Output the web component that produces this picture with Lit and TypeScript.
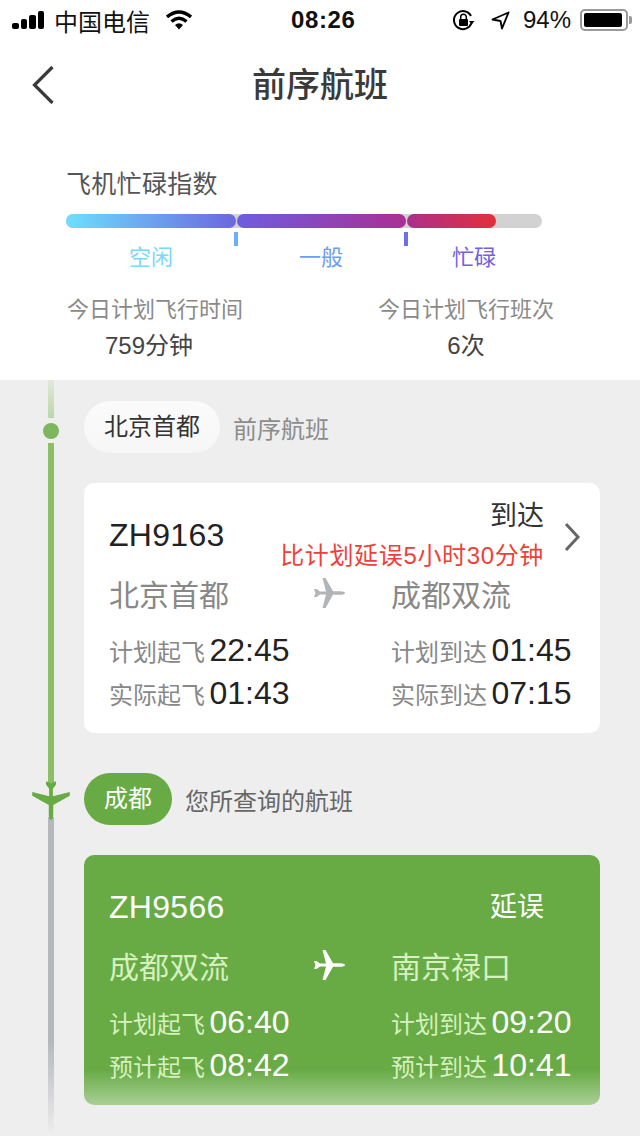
import { LitElement, html, css, svg } from "lit";
import { customElement } from "lit/decorators.js";

const planePath = "M1 12 L3.5 12 L7 14.5 L13 14.5 L9.5 1 L12.5 1 L20 14.2 L27 14.2 C30 14.2 32 15 32 16 C32 17 30 17.8 27 17.8 L20 17.8 L12.5 31 L9.5 31 L13 17.5 L7 17.5 L3.5 20 L1 20 L2.5 16 Z";

const plane = (cls: string) => html`<svg class=${cls} viewBox="0 0 32 32"><path d=${planePath} fill="currentColor"></path></svg>`;

interface Flight {
  no: string; status: string; delay?: string; from: string; to: string;
  times: [string, string, string, string][];
  kind: string;
}

@customElement("app-root")
export class AppRoot extends LitElement {
  static styles = css`
    :host { display: block; width: 640px; height: 1136px; overflow: hidden; background: #fff;
      font-family: "Liberation Sans", "Noto Sans CJK SC", sans-serif; color: #333; }
    .status { height: 40px; display: flex; align-items: center; padding-left: 12px; font-size: 24px; color: #111; }
    .signal { display: flex; align-items: flex-end; gap: 2px; height: 18px; width: 34px; margin-right: 8px; }
    .signal i { display: block; width: 6.5px; background: #000; border-radius: 2px; }
    .carrier { width: 95px; white-space: nowrap; }
    .wifi { width: 26px; height: 20px; margin-left: 17px; }
    .clock { margin-left: 99px; width: 70px; font-size: 24px; font-weight: 700; letter-spacing: 0.6px; white-space: nowrap; }
    .lock { width: 23px; height: 23px; margin-left: 91px; }
    .loc { width: 19px; height: 19px; margin-left: 16px; }
    .pct { margin-left: 13px; width: 52px; white-space: nowrap; }
    .batt { margin-left: 5px; width: 48px; height: 22px; box-sizing: border-box; border: 2px solid #999; border-radius: 5px; padding: 2px; position: relative; }
    .batt b { display: block; height: 100%; width: 94%; background: #000; border-radius: 2px; }
    .batt::after { content: ""; position: absolute; right: -6px; top: 5px; width: 3px; height: 8px; background: #999; border-radius: 0 2px 2px 0; }
    .nav { height: 90px; position: relative; display: flex; align-items: center; justify-content: center; }
    .nav h1 { margin: 0 0 0 0; font-size: 34px; line-height: 90px; font-weight: 500; color: #3a3a3a; }
    .back { position: absolute; left: 30px; top: 24px; width: 26px; height: 40px; }
    .busy { height: 250px; box-sizing: border-box; padding: 36px 0 0 66px; }
    .busy h2 { margin: 0; font-size: 25px; line-height: 36px; font-weight: 400; color: #555; letter-spacing: 0.3px; }
    .bar { width: 476px; height: 14px; margin-top: 12px; background: #d2d2d2; border-radius: 7px; display: flex; }
    .bar span { display: block; height: 14px; border-radius: 7px; }
    .s1 { width: 170px; background: linear-gradient(90deg, #6ddffd, #6c66e0); }
    .s2 { width: 169px; margin-left: 1px; background: linear-gradient(90deg, #6e5ce0, #aa2f93); }
    .s3 { width: 89px; margin-left: 1px; background: linear-gradient(90deg, #ac2f8c, #e2303a); }
    .ticks { display: flex; height: 14px; margin-top: 4px; }
    .ticks i { display: block; width: 4px; height: 14px; }
    .ticks i:first-child { margin-left: 168px; background: #6cb0f8; }
    .ticks i:last-child { margin-left: 166px; background: #6c70ec; }
    .levels { display: flex; font-size: 22px; line-height: 30px; margin-top: -3px; }
    .levels span { display: block; }
    .l1 { margin-left: 63px; color: #7cd8fb; }
    .l2 { margin-left: 126px; color: #6f9cf3; }
    .l3 { margin-left: 109px; color: #7560e0; }
    .stats { display: flex; margin-top: 19px; }
    .stat { width: 178px; text-align: center; }
    .stat + .stat { margin-left: 133px; }
    .stat p { margin: 0; font-size: 22px; line-height: 36px; color: #8a8a8a; white-space: nowrap; }
    .stat strong { display: block; font-size: 24px; line-height: 36px; font-weight: 400; color: #444; }
    .stat:first-child strong { margin-left: -12px; }
    .main { height: 756px; background: #eeeeef; display: flex; overflow: hidden; }
    .rail { width: 40px; margin: 0 13px 0 31px; display: flex; flex-direction: column; align-items: center; flex: none; }
    .rail .fade { width: 6px; height: 38px; background: linear-gradient(#e2e8dc, #bcd7a8); }
    .rail .dot { width: 16px; height: 16px; border-radius: 50%; background: #7db65c; margin: 5px 0 4px; }
    .rail .green { width: 6px; height: 340px; background: #8bbf66; }
    .rail .fp { width: 40px; height: 40px; color: #68ab45; margin-top: -3px; transform: rotate(90deg); flex: none; }
    .rail .grey { width: 6px; flex: 1; margin-top: -3px; background: linear-gradient(#b4b8bc 0%, #b4b8bc 70%, #eeeeef 100%); }
    .col { width: 516px; padding-top: 21px; }
    .tag { display: flex; align-items: center; height: 52px; }
    .pill { height: 52px; line-height: 52px; padding: 0 20px; border-radius: 26px; font-size: 24px; white-space: nowrap; }
    .pill.w { background: linear-gradient(#fbfbfb, #f6f6f6); color: #333; }
    .pill.g { background: #68ab45; color: #fff; }
    .note { margin-left: 13px; font-size: 24px; color: #8c8c8c; white-space: nowrap; }
    .note.dark { color: #666; }
    .card { height: 250px; margin: 30px 0 40px; border-radius: 10px; box-sizing: border-box; padding: 0 0 0 25px; position: relative; background: #fff; }
    .card.now { background: linear-gradient(#68ab45 0%, #68ab45 86%, #aacf96 100%); }
    .head { height: 78px; display: flex; justify-content: space-between; }
    .no { font-size: 32px; line-height: 36px; margin-top: 34px; color: #222; letter-spacing: 0.3px; white-space: nowrap; }
    .right { width: 435px; display: flex; flex-direction: column; align-items: flex-end; padding-right: 56px; box-sizing: border-box; }
    .st { font-size: 27px; line-height: 38px; margin-top: 14px; color: #333; }
    .delay { font-size: 24px; line-height: 30px; margin-top: 6px; margin-right: 0; color: #ee3f3a; letter-spacing: 0.65px; white-space: nowrap; }
    .chev { position: absolute; right: 18px; top: 38px; width: 20px; height: 32px; }
    .cities { display: grid; grid-template-columns: 204px 78px 1fr; align-items: center; height: 46px; margin-top: 9px; font-size: 30px; color: #888; }
    .cities svg { width: 32px; height: 32px; color: #b1b5b8; }
    .times { display: grid; grid-template-columns: 282px 1fr; margin-top: 13px; row-gap: 0; }
    .t { display: flex; align-items: center; height: 43px; white-space: nowrap; }
    .t span { font-size: 24px; color: #888; width: 100px; flex: none; }
    .t b { font-size: 32px; font-weight: 400; color: #222; margin-left: 0.5px; }
    .now .no, .now .st, .now .t b { color: #fff; }
    .now .st { margin-top: 33px; }
    .now .no { margin-top: 34px; }
    .now .cities, .now .t span { color: #d6f0c0; }
    .now .cities svg { color: #fff; }
  `;

  private flights: Flight[] = [
    { no: "ZH9163", status: "到达", delay: "比计划延误5小时30分钟", from: "北京首都", to: "成都双流", kind: "",
      times: [["计划起飞", "22:45", "计划到达", "01:45"], ["实际起飞", "01:43", "实际到达", "07:15"]] },
    { no: "ZH9566", status: "延误", from: "成都双流", to: "南京禄口", kind: "now",
      times: [["计划起飞", "06:40", "计划到达", "09:20"], ["预计起飞", "08:42", "预计到达", "10:41"]] },
  ];

  private card(f: Flight) {
    return html`<div class="card ${f.kind}">
      <div class="head">
        <div class="no">${f.no}</div>
        <div class="right">
          <div class="st">${f.status}</div>
          ${f.delay ? html`<div class="delay">${f.delay}</div>` : ""}
        </div>
      </div>
      ${f.kind ? "" : html`<svg class="chev" viewBox="0 0 20 32"><path d="M4 3 L16 16 L4 29" fill="none" stroke="#666" stroke-width="3"></path></svg>`}
      <div class="cities"><span>${f.from}</span>${plane("")}<span>${f.to}</span></div>
      <div class="times">
        ${f.times.map((r) => html`
          <div class="t"><span>${r[0]}</span><b>${r[1]}</b></div>
          <div class="t"><span>${r[2]}</span><b>${r[3]}</b></div>`)}
      </div>
    </div>`;
  }

  render() {
    return html`
      <div class="status">
        <div class="signal"><i style="height:6px"></i><i style="height:10px"></i><i style="height:14px"></i><i style="height:18px"></i></div>
        <span class="carrier">中国电信</span>
        <svg class="wifi" viewBox="0 0 26 20"><path d="M1 7 Q13 -3 25 7" fill="none" stroke="#000" stroke-width="3.4"></path><path d="M5.5 11.5 Q13 5 20.5 11.5" fill="none" stroke="#000" stroke-width="3.4"></path><path d="M9 15 Q13 11.5 17 15 L13 19.5 Z" fill="#000"></path></svg>
        <span class="clock">08:26</span>
        <svg class="lock" viewBox="0 0 23 23"><path d="M19.5 14 A9 9 0 1 1 19 7" fill="none" stroke="#000" stroke-width="2"></path><path d="M17 12 L22.5 12 L19.7 15.5 Z" fill="#000"></path><rect x="7" y="10" width="9" height="7" rx="1" fill="#000"></rect><path d="M8.7 10 V8 a2.8 2.8 0 0 1 5.6 0 V10" fill="none" stroke="#000" stroke-width="1.5"></path></svg>
        <svg class="loc" viewBox="0 0 19 19"><path d="M17.5 1.5 L1.5 8.5 L9.5 10 L11 17.5 Z" fill="none" stroke="#000" stroke-width="1.9" stroke-linejoin="round"></path></svg>
        <span class="pct">94%</span>
        <div class="batt"><b></b></div>
      </div>
      <div class="nav">
        <svg class="back" viewBox="0 0 26 40"><path d="M22.5 3 L4.5 21 L22.5 39" fill="none" stroke="#3a3a3a" stroke-width="3.2"></path></svg>
        <h1>前序航班</h1>
      </div>
      <div class="busy">
        <h2>飞机忙碌指数</h2>
        <div class="bar"><span class="s1"></span><span class="s2"></span><span class="s3"></span></div>
        <div class="ticks"><i></i><i></i></div>
        <div class="levels"><span class="l1">空闲</span><span class="l2">一般</span><span class="l3">忙碌</span></div>
        <div class="stats">
          <div class="stat"><p>今日计划飞行时间</p><strong>759分钟</strong></div>
          <div class="stat"><p>今日计划飞行班次</p><strong>6次</strong></div>
        </div>
      </div>
      <div class="main">
        <div class="rail">
          <div class="fade"></div>
          <div class="dot"></div>
          <div class="green"></div>
          ${plane("fp")}
          <div class="grey"></div>
        </div>
        <div class="col">
          <div class="tag"><div class="pill w">北京首都</div><div class="note">前序航班</div></div>
          ${this.card(this.flights[0])}
          <div class="tag"><div class="pill g">成都</div><div class="note dark">您所查询的航班</div></div>
          ${this.card(this.flights[1])}
        </div>
      </div>
    `;
  }
}
